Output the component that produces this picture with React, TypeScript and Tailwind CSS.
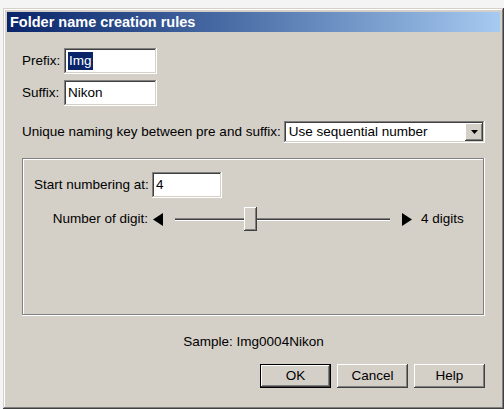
import type { ReactElement, ReactNode } from "react";

const RAISED =
  "shadow-[inset_-1px_-1px_#404040,inset_1px_1px_#ffffff,inset_-2px_-2px_#808080,inset_2px_2px_#d4d0c8]";
const SUNKEN =
  "shadow-[inset_-1px_-1px_#ffffff,inset_1px_1px_#808080,inset_-2px_-2px_#d4d0c8,inset_2px_2px_#404040]";

function Field({ width, height, children }: { width: string; height: string; children: ReactNode }): ReactElement {
  return (
    <div className={`flex items-center bg-white pl-[4px] ${width} ${height} ${SUNKEN}`}>{children}</div>
  );
}

function Button({ label, isDefault = false }: { label: string; isDefault?: boolean }): ReactElement {
  if (isDefault) {
    return (
      <div className="h-[24px] w-[71px] border border-black">
        <div className={`flex h-full w-full items-center justify-center bg-[#d4d0c8] ${RAISED}`}>{label}</div>
      </div>
    );
  }
  return (
    <div className={`flex h-[24px] w-[71px] items-center justify-center bg-[#d4d0c8] ${RAISED}`}>{label}</div>
  );
}

function Arrow({ dir }: { dir: "left" | "right" }): ReactElement {
  return (
    <svg width="10" height="13" viewBox="0 0 10 13" aria-hidden="true">
      <polygon points={dir === "left" ? "10,0 10,13 0,6.5" : "0,0 0,13 10,6.5"} fill="#000" />
    </svg>
  );
}

export default function App(): ReactElement {
  return (
    <div className="h-[409px] w-[504px] overflow-hidden bg-[#f4f4f4] pl-[3px] pt-[8px] font-['Liberation_Sans',Arial,sans-serif] text-[13.5px] leading-none text-black">
      {/* window frame */}
      <div
        className={`flex h-[401px] w-[501px] flex-col bg-[#d4d0c8] p-[4px] shadow-[inset_-1px_-1px_#404040,inset_1px_1px_#d4d0c8,inset_-2px_-2px_#808080,inset_2px_2px_#ffffff]`}
      >
        <div className="flex h-[20px] items-center bg-gradient-to-r from-[#0a246a] to-[#a6caf0] pl-[3px] text-[14.5px] font-bold text-white">
          Folder name creation rules
        </div>

        <div className="flex flex-col px-[15px] pt-[16px]">
          <div className="flex items-center">
            <span className="w-[42px]">Prefix:</span>
            <Field width="w-[93px]" height="h-[26px]">
              <span className="bg-[#0a246a] px-px py-[2px] text-white">Img</span>
            </Field>
          </div>
          <div className="mt-[6px] flex items-center">
            <span className="w-[42px]">Suffix:</span>
            <Field width="w-[93px]" height="h-[26px]">
              <span>Nikon</span>
            </Field>
          </div>

          <div className="mt-[15px] flex items-center gap-[3px]">
            <span>Unique naming key between pre and suffix:</span>
            <div className={`flex h-[22px] flex-1 items-stretch bg-white p-[2px] ${SUNKEN}`}>
              <span className="flex flex-1 items-center pl-[3px]">Use sequential number</span>
              <div className={`flex w-[18px] items-center justify-center bg-[#d4d0c8] ${RAISED}`}>
                <svg width="7" height="4" viewBox="0 0 7 4" aria-hidden="true">
                  <polygon points="0,0 7,0 3.5,4" fill="#000" />
                </svg>
              </div>
            </div>
          </div>

          {/* group box */}
          <div className="mt-[15px] h-[158px] pl-[12px] pt-[14px] shadow-[inset_-1px_-1px_#ffffff,inset_1px_1px_#808080,inset_-2px_-2px_#808080,inset_2px_2px_#ffffff]">
            <div className="flex items-center">
              <span className="w-[118px]">Start numbering at:</span>
              <Field width="w-[70px]" height="h-[26px]">
                <span>4</span>
              </Field>
            </div>
            <div className="mt-[9px] flex h-[24px] items-center">
              <span className="w-[119px] pr-[5px] text-right">Number of digit:</span>
              <Arrow dir="left" />
              <div className="relative ml-[12px] flex h-[24px] w-[215px] items-center">
                <div className="h-[3px] w-full border-t border-b border-t-[#808080] border-b-white bg-[#404040]" />
                <div className={`absolute left-[69px] top-0 h-[24px] w-[13px] bg-[#d4d0c8] ${RAISED}`} />
              </div>
              <div className="ml-[12px]">
                <Arrow dir="right" />
              </div>
              <span className="ml-[9px]">4 digits</span>
            </div>
          </div>

          <div className="mt-[18px] flex h-[16px] items-center justify-center">Sample: Img0004Nikon</div>

          <div className="mt-[14px] flex justify-end gap-[6px]">
            <Button label="OK" isDefault />
            <Button label="Cancel" />
            <Button label="Help" />
          </div>
        </div>
      </div>
    </div>
  );
}
